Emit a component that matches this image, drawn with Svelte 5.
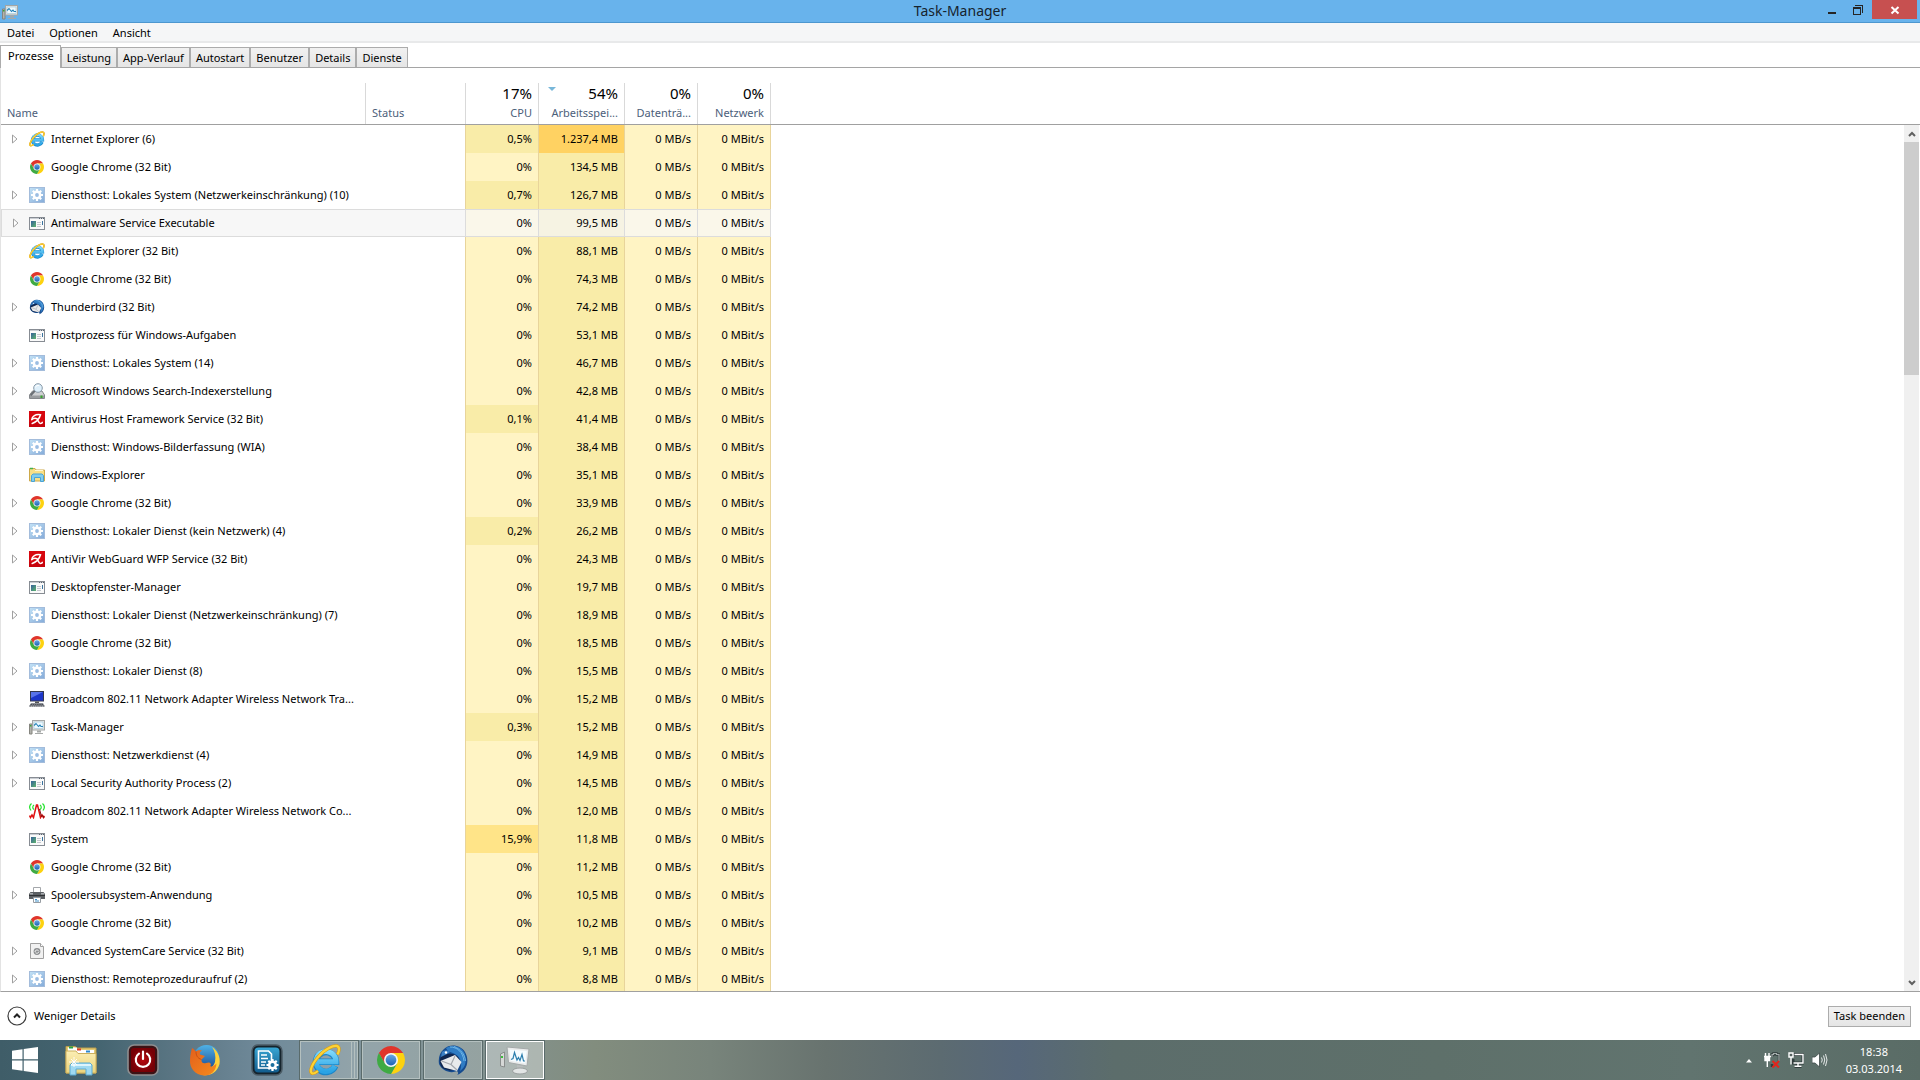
<script lang="ts">
  type Row = { name: string; icon: string; exp: boolean; cpu: string; mem: string; hover?: boolean };

  const r = (icon: string, name: string, exp: number, cpu: string, mem: string, hover = false): Row =>
    ({ name, icon, exp: exp === 1, cpu, mem, hover });

  const rows: Row[] = [
    r('ie', 'Internet Explorer (6)', 1, '0,5%', '1.237,4 MB'),
    r('chrome', 'Google Chrome (32 Bit)', 0, '0%', '134,5 MB'),
    r('gear', 'Diensthost: Lokales System (Netzwerkeinschränkung) (10)', 1, '0,7%', '126,7 MB'),
    r('app', 'Antimalware Service Executable', 1, '0%', '99,5 MB', true),
    r('ie', 'Internet Explorer (32 Bit)', 0, '0%', '88,1 MB'),
    r('chrome', 'Google Chrome (32 Bit)', 0, '0%', '74,3 MB'),
    r('bird', 'Thunderbird (32 Bit)', 1, '0%', '74,2 MB'),
    r('app', 'Hostprozess für Windows-Aufgaben', 0, '0%', '53,1 MB'),
    r('gear', 'Diensthost: Lokales System (14)', 1, '0%', '46,7 MB'),
    r('search', 'Microsoft Windows Search-Indexerstellung', 1, '0%', '42,8 MB'),
    r('avira', 'Antivirus Host Framework Service (32 Bit)', 1, '0,1%', '41,4 MB'),
    r('gear', 'Diensthost: Windows-Bilderfassung (WIA)', 1, '0%', '38,4 MB'),
    r('folder', 'Windows-Explorer', 0, '0%', '35,1 MB'),
    r('chrome', 'Google Chrome (32 Bit)', 1, '0%', '33,9 MB'),
    r('gear', 'Diensthost: Lokaler Dienst (kein Netzwerk) (4)', 1, '0,2%', '26,2 MB'),
    r('avira', 'AntiVir WebGuard WFP Service (32 Bit)', 1, '0%', '24,3 MB'),
    r('app', 'Desktopfenster-Manager', 0, '0%', '19,7 MB'),
    r('gear', 'Diensthost: Lokaler Dienst (Netzwerkeinschränkung) (7)', 1, '0%', '18,9 MB'),
    r('chrome', 'Google Chrome (32 Bit)', 0, '0%', '18,5 MB'),
    r('gear', 'Diensthost: Lokaler Dienst (8)', 1, '0%', '15,5 MB'),
    r('pc', 'Broadcom 802.11 Network Adapter Wireless Network Tra...', 0, '0%', '15,2 MB'),
    r('taskmgr', 'Task-Manager', 1, '0,3%', '15,2 MB'),
    r('gear', 'Diensthost: Netzwerkdienst (4)', 1, '0%', '14,9 MB'),
    r('app', 'Local Security Authority Process (2)', 1, '0%', '14,5 MB'),
    r('antenna', 'Broadcom 802.11 Network Adapter Wireless Network Co...', 0, '0%', '12,0 MB'),
    r('app', 'System', 0, '15,9%', '11,8 MB'),
    r('chrome', 'Google Chrome (32 Bit)', 0, '0%', '11,2 MB'),
    r('printer', 'Spoolersubsystem-Anwendung', 1, '0%', '10,5 MB'),
    r('chrome', 'Google Chrome (32 Bit)', 0, '0%', '10,2 MB'),
    r('dll', 'Advanced SystemCare Service (32 Bit)', 1, '0%', '9,1 MB'),
    r('gear', 'Diensthost: Remoteprozeduraufruf (2)', 1, '0%', '8,8 MB'),
  ];

  const tabs = ['Prozesse', 'Leistung', 'App-Verlauf', 'Autostart', 'Benutzer', 'Details', 'Dienste'];

  const tasks = [
    { icon: 'folderBig', label: 'Explorer', state: '' },
    { icon: 'power', label: 'Herunterfahren', state: '' },
    { icon: 'firefox', label: 'Mozilla Firefox', state: '' },
    { icon: 'care', label: 'Advanced SystemCare', state: '' },
    { icon: 'ie', label: 'Internet Explorer', state: 'open stack' },
    { icon: 'chrome', label: 'Google Chrome', state: 'open' },
    { icon: 'bird', label: 'Thunderbird', state: 'open' },
    { icon: 'taskmgrBig', label: 'Task-Manager', state: 'open current' },
  ];

  function heat(value: string): string {
    const n = parseFloat(value.replace('.', '').replace(',', '.'));
    if (n === 0) return 'h0';
    return n > 5 ? 'h2' : 'h1';
  }
  const memHeat = (value: string) => (value.length > 9 ? 'h3' : 'h1');
</script>

{#snippet icon(name: string)}
  {#if name === 'ie'}
    <svg viewBox="0 0 32 32" aria-hidden="true">
      <path d="M26.200 22A10 10 0 1 1 27 17.800H9" fill="none" stroke="#1a86c9" stroke-width="6.500" />
      <path d="M25.900 22A10 10 0 1 1 27 17.800H9" fill="none" stroke="url(#ieBlue)" stroke-width="5" />
      <path d="M9 27C4 31 1 30 2 25C4 18 12 8 20 4C26 .8 30.500 1 30 6C29.800 7.500 29.300 9 28.500 10.500" fill="none" stroke="#d99a10" stroke-width="3.200" />
      <path d="M9 27C4 31 1 30 2 25C4 18 12 8 20 4C26 .8 30.500 1 30 6C29.800 7.500 29.300 9 28.500 10.500" fill="none" stroke="#fdd335" stroke-width="2.200" />
    </svg>
  {:else if name === 'chrome'}
    <svg viewBox="0 0 32 32" aria-hidden="true">
      <path d="M3.880 9A14 14 0 0 1 28.120 9H16L9.940 19.500Z" fill="#e0352b" />
      <path d="M28.120 9A14 14 0 0 1 16 30L22.060 19.500L16 9Z" fill="#fdd20f" />
      <path d="M16 30A14 14 0 0 1 3.880 9L9.940 19.500H22.060Z" fill="#3faa43" />
      <circle cx="16" cy="16" r="7" fill="#f4f6f6" />
      <circle cx="16" cy="16" r="5.400" fill="url(#chromeBlue)" />
    </svg>
  {:else if name === 'gear'}
    <svg viewBox="0 0 16 16" aria-hidden="true">
      <rect x=".5" y=".5" width="15" height="15" fill="url(#gearBg)" stroke="#a3bcdb" />
      <path d="M8 2V14M2 8H14M3.800 3.800L12.200 12.200M12.200 3.800L3.800 12.200" stroke="#fff" stroke-width="2.200" />
      <circle cx="8" cy="8" r="4.400" fill="#fff" />
      <circle cx="8" cy="8" r="1.900" fill="#9bbde2" />
    </svg>
  {:else if name === 'app'}
    <svg viewBox="0 0 16 16" aria-hidden="true">
      <rect x=".5" y="2.500" width="15" height="12" fill="#fafafa" stroke="#878c93" />
      <rect x="1" y="3" width="14" height="1" fill="#c9cdd3" />
      <path d="M10 3.500h1M12 3.500h1M14 3.500h1" stroke="#5b6570" />
      <rect x="2" y="6" width="5" height="6" fill="url(#appPic)" />
      <path d="M8 7.500h4M8 9.500h4M8 11.500h4" stroke="#c4c8ce" />
      <rect x="13" y="6" width="1" height="4" fill="#3c75a0" />
    </svg>
  {:else if name === 'bird'}
    <svg viewBox="0 0 32 32" aria-hidden="true">
      <path d="M7 5C13-1 24 1 28 8C33 17 30 27 20 31C22 29 21 28 20 27C14 30 5 27 2 20C1 14 3 8 7 5Z" fill="#164b8e" />
      <path d="M9 4C15 0 24 2 27.500 9C30 16 29 23 23 27C26 18 23 12 16 9C13 8 10 7 9 4Z" fill="#2f7cc4" />
      <path d="M13 3C20 3 26 8 27 17M17 2.500C23 5 28 10 28.500 17" fill="none" stroke="#6cb4e6" stroke-width="1" />
      <path d="M3 19C2 13 6 9 11 10C17 9 22 12 23 17C22 24 16 28 11 26C6 25 4 23 3 19Z" fill="#10264f" />
      <path d="M3.500 17L18 11L24.500 18L20 27L7 23.500Z" fill="#e9eaec" />
      <path d="M4.500 17L14 20.500L18 12M14 20.500L20 26" fill="none" stroke="#a5a8ae" stroke-width="1.200" />
      <path d="M5 8C7 6 11 6 13 8L10 10L4 13Z" fill="#3c7fc3" />
      <circle cx="9" cy="8.500" r="1.200" fill="#fff" />
    </svg>
  {:else if name === 'search'}
    <svg viewBox="0 0 16 16" aria-hidden="true">
      <path d="M3.500 8H13L15.500 12V15.500H.5V12Z" fill="#cfd1d3" stroke="#85888c" />
      <path d="M1 12.500H15V15H1Z" fill="#9a9da0" />
      <rect x="11.500" y="12.500" width="2" height="2.500" fill="#38a52f" />
      <path d="M6 7.500L1.500 12.500" stroke="#6b7075" stroke-width="2" />
      <circle cx="9" cy="5" r="4.300" fill="#dff0fb" stroke="#8799a8" />
      <path d="M6.500 4.500A2.800 2.800 0 0 1 10 2.500" fill="none" stroke="#fff" />
    </svg>
  {:else if name === 'avira'}
    <svg viewBox="0 0 16 16" aria-hidden="true">
      <rect width="16" height="16" fill="#d7070f" />
      <path d="M0 11H16V16H0Z" fill="#b80009" opacity=".5" />
      <path d="M2.700 8.800C3 5 6.500 3 11.500 3.800C10.500 7.500 7.500 11 3.200 12.500M2.700 8.800C4.500 7.200 6.500 7 8.300 8C9 9.500 9.500 11 10.500 12C11.500 12.800 12.800 12.300 13.300 11.300" fill="none" stroke="#fff" stroke-width="1.500" stroke-linecap="round" />
    </svg>
  {:else if name === 'folder'}
    <svg viewBox="0 0 16 16" aria-hidden="true">
      <path d="M.5 1.500H6L7 3H15.500V14H.5Z" fill="#f7df86" stroke="#cda94a" />
      <path d="M1 1.500h3" stroke="#45b04d" stroke-width="1.500" />
      <path d="M6 3.500h8" stroke="#fff6cf" />
      <path d="M2.500 14.500V8.500L4 7H13L14.500 8.500V14.500H11.500V10.500H5.500V14.500Z" fill="#80cdef" stroke="#4aa3d4" />
    </svg>
  {:else if name === 'pc'}
    <svg viewBox="0 0 16 16" aria-hidden="true">
      <rect x="1.500" y=".5" width="13" height="9.500" fill="#1d36c9" stroke="#34384e" />
      <path d="M2 1h12L2 7Z" fill="#5873ea" />
      <path d="M6 10.500h4v1.500H6Z" fill="#555" />
      <path d="M2 12H14L16 15.500H0Z" fill="#8d9096" />
      <path d="M1.500 13.500h13M.5 15h15" stroke="#3b3f47" stroke-width=".8" stroke-dasharray="1.500 .7" />
    </svg>
  {:else if name === 'taskmgr'}
    <svg viewBox="0 0 16 16" aria-hidden="true">
      <path d="M.5 5h2.500v10H.5Z" fill="#b3b3ae" stroke="#85857f" />
      <rect x="1" y="6" width="1.500" height="1.500" fill="#3ba639" />
      <rect x="3.500" y="1.500" width="12" height="9.500" fill="#e5e7e6" stroke="#a3a6a5" />
      <rect x="5" y="3" width="9" height="6.500" fill="#eefaff" stroke="#9dc3d6" stroke-width=".6" />
      <path d="M5 6.500L7 4.500L9.500 7.500L11 6L12 7.500H14" fill="none" stroke="#2583b8" stroke-width="1.100" />
      <path d="M8 11.500h4v2H8ZM6 14h8v1H6Z" fill="#a6a9a8" />
    </svg>
  {:else if name === 'antenna'}
    <svg viewBox="0 0 16 16" aria-hidden="true">
      <path d="M2.500 .5Q-1 3.500 2 7.500M5 2Q2.500 4 5 6.500M13.500 .5Q17 3.500 14 7.500M11 2Q13.500 4 11 6.500" fill="none" stroke="#24e32d" stroke-width="1.200" />
      <path d="M.5 12.500L1.500 14.500L3 12L4.500 14.500L7.500 2H8.500L11.500 14.500L13 12L14.500 14.500L15.500 13" fill="none" stroke="#e01313" stroke-width="1.500" />
      <path d="M10.500 6L12.500 13.500L14 12.500L15 15" fill="none" stroke="#861010" />
    </svg>
  {:else if name === 'printer'}
    <svg viewBox="0 0 16 16" aria-hidden="true">
      <path d="M4.500 .5h7V6h-7Z" fill="#fff" stroke="#a4a7ab" />
      <path d="M1.500 5H14.500L16 7V12H0V7Z" fill="#5c6064" />
      <path d="M0 8.500h16" stroke="#2f3235" />
      <path d="M1 6h3v1.500H1ZM12 6h3v1.500h-3Z" fill="#a9adb1" />
      <path d="M4.500 10.500h7v5h-7Z" fill="#fff" stroke="#979da3" />
      <path d="M6 12.500h2M6 14h4" stroke="#3f8fc6" />
    </svg>
  {:else if name === 'dll'}
    <svg viewBox="0 0 16 16" aria-hidden="true">
      <path d="M1.500 .5H11.500L14.500 3.500V15.500H1.500Z" fill="#f1f1f1" stroke="#a0a0a0" />
      <path d="M11.500 .5V3.500H14.500" fill="#fff" stroke="#a0a0a0" />
      <circle cx="8" cy="8.500" r="3.400" fill="#8d8f91" />
      <path d="M6 9C6 7 8 6.500 9.500 7.500M10 8.500C9.500 10.500 7.500 10.500 6.500 9.800" fill="none" stroke="#f7f7f7" />
    </svg>
  {:else if name === 'folderBig'}
    <svg viewBox="0 0 32 32" aria-hidden="true">
      <path d="M1 2.500H10L12 4H31V29H1Z" fill="#e5cb75" stroke="#bb9d4a" />
      <path d="M3 3.500H12V6H29V12H3Z" fill="#fff" />
      <rect x="4" y="2.500" width="4" height="2" fill="#2aa147" />
      <rect x="12" y="4.500" width="4" height="2" fill="#dd3b2c" />
      <rect x="21" y="6.500" width="4" height="2" fill="#2c87ce" />
      <path d="M1 7H11L13 9.500H31V29H1Z" fill="url(#folderGold)" stroke="#cdb05d" />
      <path d="M5 31V21L7 19H25L27 21V31H21V25H11V31Z" fill="#9fdaf2" stroke="#5cabd2" />
      <path d="M6 21H26" stroke="#dcf4fd" stroke-width="2" />
      <path d="M9 13V23M4 18H14M6 15L12 21M12 15L6 21" stroke="#fff" stroke-width=".9" />
    </svg>
  {:else if name === 'power'}
    <svg viewBox="0 0 32 32" aria-hidden="true">
      <rect x="1" y="1" width="30" height="30" rx="6" fill="#3c1215" stroke="#8e8e90" stroke-width="1.600" />
      <rect x="4" y="4" width="24" height="24" rx="3" fill="url(#powerRed)" />
      <path d="M12 9.700A7.200 7.200 0 1 0 20 9.700M16 7.500V15" fill="none" stroke="#fff" stroke-width="2.200" stroke-linecap="round" />
    </svg>
  {:else if name === 'firefox'}
    <svg viewBox="0 0 32 32" aria-hidden="true">
      <circle cx="17.500" cy="14.500" r="13.500" fill="url(#foxBlue)" />
      <path d="M23 3C28 6 32 13 30.500 20C28 29 21 32 14 31L11 26C18 28 24 24 26 18C27 12 26 7 23 3Z" fill="#ffd23b" />
      <path d="M3 4C4.500 5 6 6.500 7 7.500C8.500 6 11 6 13 6.500C11 7.500 10.500 9 11 10.500L16 12L12.500 15.500C12 18 14 20 17 19C20 18 21 18.500 22 20C20 24 24 23 27.500 19.500C27 28 21 32 15 31.500C6 31 .5 24 1 16C1 12 2 8 3 4Z" fill="url(#foxOrange)" />
      <path d="M12.500 15.500C8 14 7 11 7 7.500" fill="none" stroke="#c84f13" />
    </svg>
  {:else if name === 'care'}
    <svg viewBox="0 0 32 32" aria-hidden="true">
      <rect x="1" y="1" width="30" height="30" rx="6" fill="#15242d" stroke="#4b5b65" stroke-width="1.500" />
      <rect x="3.500" y="3.500" width="25" height="25" rx="4" fill="url(#careBlue)" />
      <path d="M7.500 7H17.500L20.500 10V24H7.500Z" fill="none" stroke="#fff" stroke-width="1.600" />
      <path d="M10 11h6M10 14.500h7M10 18h5M10 21h4" stroke="#fff" stroke-width="1.600" />
      <path d="M21.500 15V27M15.500 21H27.500M17.300 16.800L25.700 25.200M25.700 16.800L17.300 25.200" stroke="#fff" stroke-width="2.200" />
      <circle cx="21.500" cy="21" r="4.500" fill="#fff" />
      <circle cx="21.500" cy="21" r="2" fill="#1a6f9e" />
    </svg>
  {:else if name === 'taskmgrBig'}
    <svg viewBox="0 0 32 32" aria-hidden="true">
      <path d="M1.500 10L5.500 8V23L1.500 22Z" fill="#d6d8d7" stroke="#898d8c" />
      <path d="M2 13h2" stroke="#3cbf3d" stroke-width="2" />
      <path d="M8 3L30 5L28 22L9.500 18.500Z" fill="#e9ebeb" stroke="#a4a9a9" />
      <path d="M10.500 5.500L27.800 7L26.200 19.500L11.500 16.800Z" fill="#f5fcff" />
      <path d="M12 15.500L14 14.500L15.500 8.500L18 16L19.500 13.500L21 16.500L23 10.500L24.500 17H26" fill="none" stroke="#2d7fae" stroke-width="1.200" />
      <path d="M18 21L24 22L23 26H18Z" fill="#b9bdbd" />
      <ellipse cx="21" cy="27" rx="7.500" ry="3" fill="#e2e5e5" stroke="#9ba0a0" />
    </svg>
  {/if}
{/snippet}

<div class="screen">
  <svg class="defs" aria-hidden="true">
    <defs>
      <linearGradient id="ieBlue" x1="0" y1="0" x2="0" y2="1"><stop offset="0" stop-color="#7fd8fb" /><stop offset="1" stop-color="#2aa3e4" /></linearGradient>
      <linearGradient id="chromeBlue" x1="0" y1="0" x2="0" y2="1"><stop offset="0" stop-color="#69a7e4" /><stop offset="1" stop-color="#1c62b5" /></linearGradient>
      <linearGradient id="gearBg" x1="0" y1="0" x2="1" y2="1"><stop offset="0" stop-color="#c3e2f6" /><stop offset="1" stop-color="#84abd9" /></linearGradient>
      <linearGradient id="appPic" x1="0" y1="0" x2="1" y2="1"><stop offset="0" stop-color="#345f9b" /><stop offset="1" stop-color="#5fb56d" /></linearGradient>
      <linearGradient id="folderGold" x1="0" y1="0" x2="0" y2="1"><stop offset="0" stop-color="#fbeeb4" /><stop offset="1" stop-color="#ecd47c" /></linearGradient>
      <radialGradient id="powerRed"><stop offset="0" stop-color="#b80a10" /><stop offset="1" stop-color="#750006" /></radialGradient>
      <linearGradient id="foxBlue" x1="0" y1="0" x2="0" y2="1"><stop offset="0" stop-color="#4fb2e6" /><stop offset="1" stop-color="#153f8c" /></linearGradient>
      <linearGradient id="foxOrange" x1="0" y1="0" x2="1" y2="1"><stop offset="0" stop-color="#e2601c" /><stop offset="1" stop-color="#f58a1d" /></linearGradient>
      <linearGradient id="careBlue" x1="0" y1="0" x2="0" y2="1"><stop offset="0" stop-color="#38a5d3" /><stop offset="1" stop-color="#125c8d" /></linearGradient>
    </defs>
  </svg>

  <header class="titlebar">
    <span class="winicon">{@render icon('taskmgr')}</span>
    <h1>Task-Manager</h1>
    <div class="winbuttons">
      <button class="min" aria-label="Minimieren"><svg viewBox="0 0 10 10"><path d="M1 8h8" stroke="#252525" stroke-width="2" /></svg></button>
      <button class="max" aria-label="Verkleinern"><svg viewBox="0 0 10 10" shape-rendering="crispEdges"><path d="M2 .5H9.500V8" fill="none" stroke="#252525" /><path d="M.5 3V9.500H7.500V3" fill="none" stroke="#252525" /><path d="M0 3h8" stroke="#252525" stroke-width="2" /></svg></button>
      <button class="close" aria-label="Schließen"><svg viewBox="0 0 10 10"><path d="M1.500 2L8.500 8.500M8.500 2L1.500 8.500" stroke="#fff" stroke-width="2" /></svg></button>
    </div>
  </header>

  <nav class="menubar" aria-label="Menü">
    <button>Datei</button><button>Optionen</button><button>Ansicht</button>
  </nav>

  <div class="tabs" role="tablist">
    {#each tabs as tab, i}
      <button role="tab" aria-selected={i === 0} class:active={i === 0}>{tab}</button>
    {/each}
  </div>

  <main class="content">
    <div class="tablewrap">
      <table>
        <colgroup><col class="c-name" /><col class="c-status" /><col class="c-cpu" /><col class="c-mem" /><col class="c-cpu" /><col class="c-cpu" /><col /></colgroup>
        <thead>
          <tr>
            <th class="left" scope="col"><div class="head">Name</div></th>
            <th class="left" scope="col"><div class="head">Status</div></th>
            <th scope="col"><div class="head"><span class="total">17%</span><span>CPU</span></div></th>
            <th scope="col" aria-sort="descending">
              <div class="head"><span class="total sorted"><svg viewBox="0 0 8 4" aria-hidden="true"><path d="M0 0H8L4 4Z" fill="#78b7d9" /></svg>54%</span><span>Arbeitsspei...</span></div>
            </th>
            <th scope="col"><div class="head"><span class="total">0%</span><span>Datenträ...</span></div></th>
            <th scope="col"><div class="head"><span class="total">0%</span><span>Netzwerk</span></div></th>
            <td class="rest"></td>
          </tr>
        </thead>
        <tbody>
          {#each rows as row}
            <tr class:hover={row.hover}>
              <td class="name">
                <div class="namecell">
                  {#if row.exp}
                    <button class="expander" aria-label="Erweitern"><svg viewBox="0 0 6 10"><path d="M.5 1L5 5L.5 9Z" fill="#fff" stroke="#a0a0a0" /></svg></button>
                  {:else}
                    <span class="expander"></span>
                  {/if}
                  <span class="icon">{@render icon(row.icon)}</span>
                  <span class="label">{row.name}</span>
                </div>
              </td>
              <td class="status"></td>
              <td class="num {heat(row.cpu)}">{row.cpu}</td>
              <td class="num {memHeat(row.mem)}">{row.mem}</td>
              <td class="num h0">0 MB/s</td>
              <td class="num h0">0 MBit/s</td>
              <td class="rest"></td>
            </tr>
          {/each}
        </tbody>
      </table>
    </div>
    <div class="side">
      <div class="sidehead"></div>
      <div class="scrollbar">
        <button aria-label="Nach oben"><svg viewBox="0 0 8 6"><path d="M1 5L4 2L7 5" fill="none" stroke="#606060" stroke-width="2" /></svg></button>
        <div class="track"><div class="thumb"></div></div>
        <button aria-label="Nach unten"><svg viewBox="0 0 8 6"><path d="M1 1L4 4L7 1" fill="none" stroke="#606060" stroke-width="2" /></svg></button>
      </div>
    </div>
  </main>

  <footer class="footer">
    <button class="less">
      <svg viewBox="0 0 20 20" aria-hidden="true"><circle cx="10" cy="10" r="9" fill="#fff" stroke="#3c3c3c" stroke-width="1.200" /><path d="M7 11.500L10 8.500L13 11.500" fill="none" stroke="#222" stroke-width="2" /></svg>
      Weniger Details
    </button>
    <button class="end">Task beenden</button>
  </footer>

  <div class="taskbar">
    <button class="start" aria-label="Start">
      <svg viewBox="0 0 26 26" aria-hidden="true"><path d="M0 3.700L10.500 2.200V12.300H0ZM11.700 2L26 0V12.300H11.700ZM0 13.500H10.500V23.700L0 22.200ZM11.700 13.500H26V26L11.700 24Z" fill="#fff" /></svg>
    </button>
    {#each tasks as task}
      <button class="task {task.state}" aria-label={task.label}>{@render icon(task.icon)}</button>
    {/each}
    <div class="tray">
      <button class="up" aria-label="Ausgeblendete Symbole"><svg viewBox="0 0 8 5"><path d="M0 5L4 .5L8 5Z" fill="#fff" /></svg></button>
      <button aria-label="Energie">
        <svg viewBox="0 0 16 16">
          <path d="M8 5V2.500H9.500V1.500H12.500V2.500H15V9M8 12V15" fill="none" stroke="#323d3d" stroke-width="2.500" />
          <path d="M8 5V2.500H9.500V1.500H12.500V2.500H15V9" fill="none" stroke="#a3acab" stroke-width="1.200" />
          <path d="M1.500 1V4M5 1V4M0 4.500H7M1 5V8.500H5.500V5ZM3.300 8V15" fill="#fff" stroke="#fff" stroke-width="1.400" />
          <path d="M8.500 9L15 15.500M15 9L8.500 15.500" stroke="#e3241b" stroke-width="2" />
        </svg>
      </button>
      <button aria-label="Netzwerk">
        <svg viewBox="0 0 16 16">
          <path d="M5.500 2.500H15V11H5V7M9 11V14M6.500 14.500H13.500" fill="none" stroke="#313c3c" stroke-width="3" />
          <path d="M6.500 2.500H15V11H5.500M10 11V14M6.500 14.300H13.500" fill="none" stroke="#fff" stroke-width="1.400" />
          <path d="M1 1H5V5H1ZM3 5V12.500" fill="#54615f" stroke="#fff" stroke-width="1.400" />
        </svg>
      </button>
      <button aria-label="Lautstärke">
        <svg viewBox="0 0 16 16">
          <path d="M0 5H3L7.500 1V15L3 11H0Z" fill="#fff" stroke="#3f4a49" stroke-width=".8" />
          <path d="M9.500 5.500Q11 8 9.500 10.500M11.500 3.500Q14 8 11.500 12.500M13.500 2Q16.500 8 13.500 14" fill="none" stroke="#e6eae9" />
        </svg>
      </button>
    </div>
    <time class="clock" datetime="2014-03-03T18:38"><span>18:38</span><span>03.03.2014</span></time>
  </div>
</div>

<style>
  :global(body) { margin: 0; }
  .screen {
    display: flex;
    flex-direction: column;
    height: 100vh;
    background: #fff;
    color: #000;
    font: 11px/16px "Noto Sans", "Open Sans", sans-serif;
    overflow: hidden;
  }
  .defs { position: absolute; width: 0; height: 0; }
  button { font: inherit; color: inherit; background: none; border: 0; padding: 0; margin: 0; display: flex; align-items: center; justify-content: center; }
  svg { display: block; }

  .titlebar {
    display: grid;
    grid-template-columns: 1fr auto 1fr;
    align-items: center;
    flex: none;
    height: 22px;
    background: #68b3ec;
    border-bottom: 1px solid #4d97cf;
  }
  .winicon { padding-left: 2px; padding-top: 2px; }
  .winicon :global(svg) { width: 16px; height: 16px; }
  h1 { margin: 0; font-size: 14px; line-height: 22px; font-weight: 400; color: #16232e; }
  .winbuttons { display: flex; justify-content: flex-end; align-self: start; padding-right: 3px; }
  .winbuttons button { width: 26px; height: 19px; padding-right: 2px; box-sizing: border-box; }
  .winbuttons svg { width: 10px; height: 10px; }
  .winbuttons button.close { width: 45px; padding: 0; background: #c75050; }

  .menubar { display: flex; gap: 15px; flex: none; height: 17px; padding: 1px 0 0 7px; background: #f5f6f7; border-bottom: 2px solid #e8e9ea; }

  .tabs { display: flex; align-items: flex-end; flex: none; height: 24px; border-bottom: 1px solid #a5a5a5; }
  .tabs button {
    height: 20px;
    padding: 1px 5px 0;
    box-sizing: border-box;
    border: 1px solid #acacac;
    border-bottom: 0;
    background: linear-gradient(#f1f1f1, #e5e5e5);
  }
  .tabs button.active { height: 23px; padding: 0 6px 3px 7px; background: #fff; margin-bottom: -1px; }

  .content { display: flex; flex: 1; min-height: 0; border-left: 1px solid #e3e3e3; border-bottom: 1px solid #a0a0a0; }
  .tablewrap { flex: 1; min-width: 0; overflow: hidden; }
  table { width: 100%; table-layout: fixed; border-collapse: separate; border-spacing: 0; }
  .c-name { width: 365px; }
  .c-status { width: 100px; }
  .c-cpu { width: 73px; }
  .c-mem { width: 86px; }
  th, td { padding: 0; box-sizing: border-box; }
  thead th, thead td { height: 57px; border-bottom: 1px solid #a0a0a0; vertical-align: bottom; font-weight: 400; color: #4c607a; text-align: right; }
  .head { display: flex; flex-direction: column; justify-content: flex-end; gap: 2px; box-sizing: border-box; height: 41px; padding: 0 6px 3px; border-right: 1px solid #d9d9d9; white-space: nowrap; }
  .left { text-align: left; }
  .total { color: #000; font-size: 15px; line-height: 20px; }
  .sorted { display: flex; justify-content: space-between; padding-left: 3px; }
  .sorted svg { width: 8px; height: 4px; margin-top: 4px; }

  tbody td { height: 28px; }
  .namecell { display: flex; align-items: center; }
  .expander { width: 28px; height: 20px; box-sizing: border-box; flex: none; }
  .expander svg { width: 6px; height: 10px; }
  .icon { width: 16px; height: 16px; flex: none; }
  .icon :global(svg) { width: 16px; height: 16px; }
  .label { padding-left: 6px; white-space: nowrap; }
  .status { border-right: 1px solid #e8d49b; }
  .num { text-align: right; padding-right: 6px; border-right: 1px solid #e8d49b; white-space: nowrap; }
  .h0 { background: #fff4c4; }
  .h1 { background: #f9eca8; }
  .h2 { background: #ffe488; }
  .h3 { background: #ffd262; }
  .hover td:not(.rest) { background: #f7f7f7; border-top: 1px solid #dcdcdc; border-bottom: 1px solid #dcdcdc; }
  .hover .name { border-left: 1px solid #dcdcdc; }
  .hover .name .expander { width: 27px; }
  .hover .status, .hover .num { border-right-color: #dcdcdc; }
  .hover td.h0:not(.rest) { background: #faf7ea; }
  .hover td.h1:not(.rest) { background: #f6f3e3; }

  .side { display: flex; flex-direction: column; width: 16px; }
  .sidehead { height: 56px; border-bottom: 1px solid #a0a0a0; }
  .scrollbar { display: flex; flex-direction: column; flex: 1; min-height: 0; margin-right: 1px; background: #f0f0f0; }
  .scrollbar button { height: 17px; }
  .scrollbar svg { width: 8px; height: 6px; }
  .track { flex: 1; }
  .thumb { height: 28%; background: #cdcdcd; }

  .footer { display: flex; align-items: center; justify-content: space-between; flex: none; height: 48px; padding: 0 9px 0 7px; }
  .less { gap: 7px; }
  .less svg { width: 20px; height: 20px; }
  .end { height: 21px; padding: 0 5px; border: 1px solid #acacac; background: linear-gradient(#f1f1f1, #e5e5e5); box-sizing: border-box; }

  .taskbar {
    display: flex;
    gap: 2px;
    flex: none;
    height: 40px;
    color: #fff;
    background: linear-gradient(90deg, #3f5d68 0, #446470 5%, #5f7987 10%, #718b9b 14%, #80949b 19%, #83928f 26%, #828d7e 31%, #78847b 37%, #68736f 43%, #5c6b71 49%, #56677a 53%, #5c6d6b 58%, #5e706a 75%, #61746f 88%, #5a6c66 100%);
  }
  .start { width: 49px; padding-left: 1px; }
  .start svg { width: 26px; height: 26px; }
  .task { width: 60px; box-sizing: border-box; }
  .task :global(svg) { width: 32px; height: 32px; }
  .open { border: 1px solid #5a6b6b; background: #ffffff26; box-shadow: inset 0 0 0 1px #b4c0bf; }
  .stack { position: relative; padding-right: 8px; }
  .stack::after { content: ""; position: absolute; top: 0; bottom: 0; right: 3px; width: 2px; border: solid #b4c0bf; border-width: 0 1px; }
  .current { background: #ffffff58; box-shadow: inset 0 0 0 1px #fff; }
  .tray { display: flex; align-items: center; gap: 8px; margin-left: auto; }
  .tray svg { width: 16px; height: 16px; }
  .tray .up { width: 10px; padding-right: 4px; }
  .tray .up svg { width: 8px; height: 5px; }
  .clock { display: flex; flex-direction: column; justify-content: center; align-items: center; gap: 1px; padding: 0 18px 0 16px; }
</style>
